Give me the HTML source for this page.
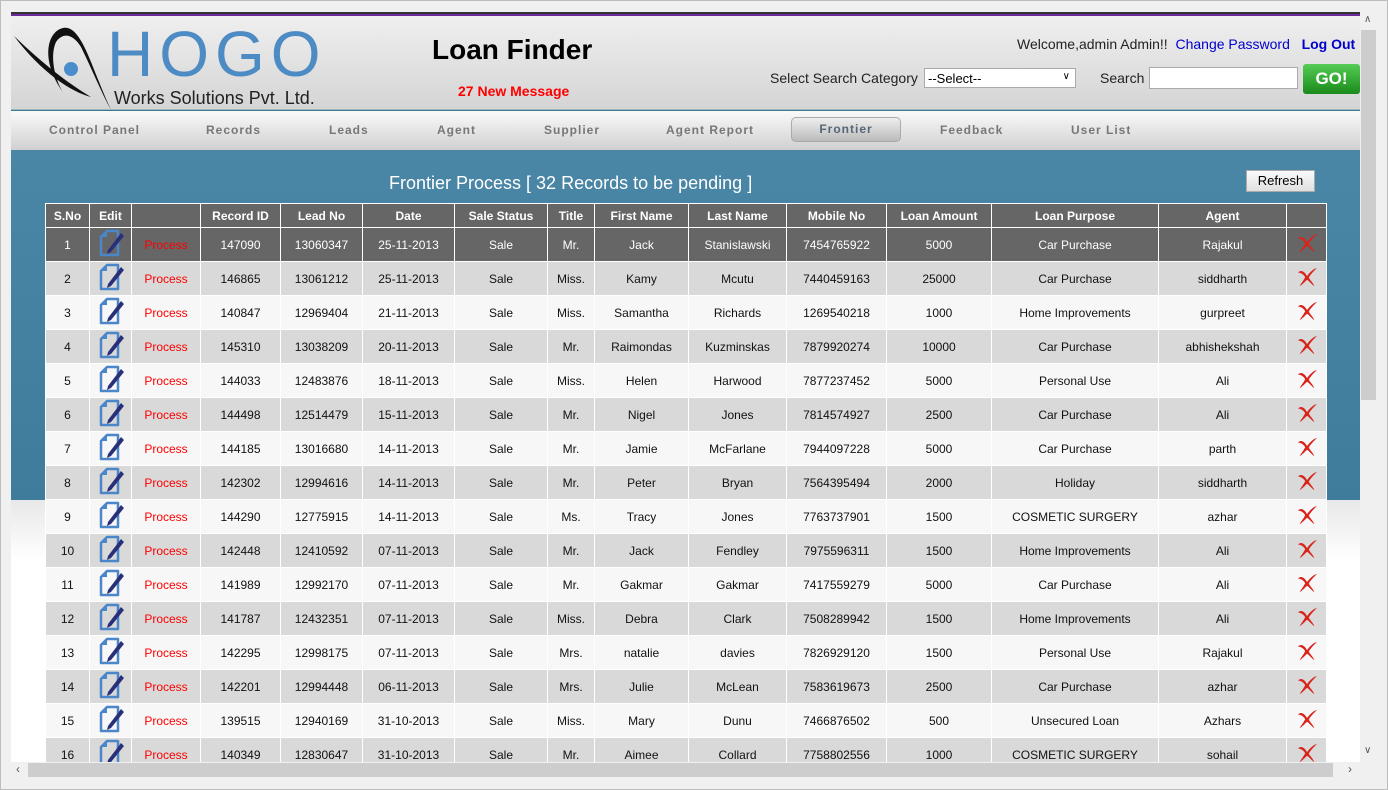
<!DOCTYPE html>
<html><head><meta charset="utf-8">
<style>
*{margin:0;padding:0;box-sizing:border-box}
body{width:1388px;height:790px;background:#f0f0f0;font-family:"Liberation Sans",Arial,sans-serif;position:relative;overflow:hidden}
.frame{position:absolute;left:0;top:0;width:1388px;height:790px;border:1px solid #bdbdbd}
.view{position:absolute;left:11px;top:12px;width:1349px;height:750px;overflow:hidden;background:#fff}
.hdr{position:absolute;left:0;top:0;width:1349px;height:99px;background:linear-gradient(#f0f0f0,#d4d4d4);border-top:2px solid #333}
.hdr:before{content:"";position:absolute;left:0;top:0;width:100%;height:2px;background:#6a2a9a}
.bl{position:absolute;left:0;top:95px;width:1349px;height:4px;background:#3f7890;border-top:1px solid #9bb}
.nav{position:absolute;left:0;top:99px;width:1349px;height:39px;background:linear-gradient(#fafafa,#d0d0d0)}
.nav span{position:absolute;top:12px;font-size:12px;font-weight:bold;color:#777;letter-spacing:1px}
.nav .act{top:6px;height:25px;width:110px;left:780px;border:1px solid #aaa;border-radius:5px;background:linear-gradient(#eee,#bbb);text-align:center;line-height:23px;color:#567}
.blue{position:absolute;left:0;top:138px;width:1349px;height:350px;background:linear-gradient(#4a86a5,#3f7b9b)}
.below{position:absolute;left:0;top:488px;width:1349px;height:270px;background:linear-gradient(#e8e8e8,#fff 60px)}
table{position:absolute;left:34px;top:191px;border-collapse:collapse;font-size:12px;table-layout:fixed}
td,th{border:1px solid #fff;text-align:center;height:34px;color:#111;padding:0}
th{background:#666;color:#fff;height:24px;font-size:12px}
tr.r1 td{background:#666;color:#fff}
tr.e td{background:#d9d9d9}
tr.o td{background:#f7f7f7}
tr td.p{color:#f00}
.vs{position:absolute;left:1360px;top:12px;width:17px;height:750px;background:#f0f0f0}
.vs .th{position:absolute;left:1px;top:18px;width:15px;height:370px;background:#cdcdcd}
.hs{position:absolute;left:11px;top:762px;width:1349px;height:16px;background:#f0f0f0}
.hs .th{position:absolute;left:17px;top:1px;width:1305px;height:14px;background:#cdcdcd}
</style></head><body>
<div class="frame"></div>
<div class="view">
<div class="hdr">
 <svg style="position:absolute;left:0;top:8px" width="110" height="90" viewBox="0 0 110 90">
  <path d="M3 14 C30 40 55 60 80 75 C60 70 30 50 3 14Z" fill="#111"/>
  <path d="M52 70 C30 40 35 10 52 6 C62 4 70 15 80 40 C88 60 94 75 100 88 C90 70 80 45 70 25 C62 12 52 10 45 20 C38 35 45 60 52 70Z" fill="#111"/>
  <circle cx="60" cy="47" r="7" fill="#4a8ccc"/>
 </svg>
 <div style="position:absolute;left:96px;top:8px;font-size:64px;color:#4d8bc4;letter-spacing:6px;line-height:64px">HOGO</div>
 <div style="position:absolute;left:103px;top:74px;font-size:18px;color:#222">Works Solutions Pvt. Ltd.</div>
 <div style="position:absolute;left:421px;top:20px;font-size:28px;font-weight:bold;color:#000">Loan Finder</div>
 <div style="position:absolute;left:447px;top:69px;font-size:14px;font-weight:bold;color:#f00">27 New Message</div>
 <div style="position:absolute;left:1006px;top:22px;font-size:14px;color:#222">Welcome,admin Admin!! &nbsp;<span style="color:#00c">Change Password</span> &nbsp;&nbsp;<b style="color:#00c">Log Out</b></div>
 <div style="position:absolute;left:759px;top:56px;font-size:14px;color:#222">Select Search Category</div>
 <div style="position:absolute;left:913px;top:54px;width:152px;height:20px;background:#fff;border:1px solid #aaa;font-size:13px;padding:2px 3px">--Select--<span style="position:absolute;right:5px;top:2px;font-size:10px">&#8744;</span></div>
 <div style="position:absolute;left:1089px;top:56px;font-size:14px;color:#222">Search</div>
 <div style="position:absolute;left:1138px;top:53px;width:149px;height:22px;background:#fff;border:1px solid #aaa"></div>
 <div style="position:absolute;left:1292px;top:50px;width:57px;height:30px;background:linear-gradient(#5c5,#1a8a1a);border-radius:3px;color:#fff;font-weight:bold;font-size:17px;text-align:center;line-height:30px">GO!</div>
 <div class="bl"></div>
</div>
<div class="nav">
 <span style="left:38px">Control Panel</span><span style="left:195px">Records</span><span style="left:318px">Leads</span><span style="left:426px">Agent</span><span style="left:533px">Supplier</span><span style="left:655px">Agent Report</span><span class="act">Frontier</span><span style="left:929px">Feedback</span><span style="left:1060px">User List</span>
</div>
<div class="blue"></div>
<div class="below"></div>
<div style="position:absolute;left:378px;top:161px;font-size:18px;color:#fff">Frontier Process [ 32 Records to be pending ]</div>
<div style="position:absolute;left:1235px;top:158px;width:69px;height:22px;background:linear-gradient(#fafafa,#e0e0e0);border:1px solid #aaa;font-size:13px;text-align:center;line-height:20px">Refresh</div>
<svg width="0" height="0" style="position:absolute"><defs>
<symbol id="ed" viewBox="0 0 30 30"><path d="M5 9 L11 3 H22 V27 H5 Z" fill="none" stroke="#4a86c8" stroke-width="2.5" stroke-linejoin="round"/><path d="M5 9 H11 V3" fill="#4a86c8"/><path d="M12 22 L25 5 L28 8 L15 24 Z M11 26 L12 22 L15 24Z" fill="#2a2f7a"/></symbol>
<symbol id="dx" viewBox="0 0 24 22"><path d="M2 6 C6 2 10 6 12 10 C15 6 19 2 23 1 C19 5 15 9 14 12 C16 15 19 18 20 21 C17 19 14 15 12 14 C9 17 6 20 4 21 C6 17 9 14 10 11 C8 8 5 6 2 6Z" fill="#d8241c"/></symbol>
</defs></svg>
<table>
<colgroup><col style="width:44px"><col style="width:42px"><col style="width:69px"><col style="width:80px"><col style="width:82px"><col style="width:92px"><col style="width:93px"><col style="width:47px"><col style="width:94px"><col style="width:98px"><col style="width:100px"><col style="width:105px"><col style="width:167px"><col style="width:128px"><col style="width:40px"></colgroup>
<tr><th>S.No</th><th>Edit</th><th></th><th>Record ID</th><th>Lead No</th><th>Date</th><th>Sale Status</th><th>Title</th><th>First Name</th><th>Last Name</th><th>Mobile No</th><th>Loan Amount</th><th>Loan Purpose</th><th>Agent</th><th></th></tr>
<tr class="r1"><td>1</td><td><svg width="30" height="30"><use href="#ed"/></svg></td><td class="p">Process</td><td>147090</td><td>13060347</td><td>25-11-2013</td><td>Sale</td><td>Mr.</td><td>Jack</td><td>Stanislawski</td><td>7454765922</td><td>5000</td><td>Car Purchase</td><td>Rajakul</td><td><svg width="22" height="20"><use href="#dx"/></svg></td></tr>
<tr class="e"><td>2</td><td><svg width="30" height="30"><use href="#ed"/></svg></td><td class="p">Process</td><td>146865</td><td>13061212</td><td>25-11-2013</td><td>Sale</td><td>Miss.</td><td>Kamy</td><td>Mcutu</td><td>7440459163</td><td>25000</td><td>Car Purchase</td><td>siddharth</td><td><svg width="22" height="20"><use href="#dx"/></svg></td></tr>
<tr class="o"><td>3</td><td><svg width="30" height="30"><use href="#ed"/></svg></td><td class="p">Process</td><td>140847</td><td>12969404</td><td>21-11-2013</td><td>Sale</td><td>Miss.</td><td>Samantha</td><td>Richards</td><td>1269540218</td><td>1000</td><td>Home Improvements</td><td>gurpreet</td><td><svg width="22" height="20"><use href="#dx"/></svg></td></tr>
<tr class="e"><td>4</td><td><svg width="30" height="30"><use href="#ed"/></svg></td><td class="p">Process</td><td>145310</td><td>13038209</td><td>20-11-2013</td><td>Sale</td><td>Mr.</td><td>Raimondas</td><td>Kuzminskas</td><td>7879920274</td><td>10000</td><td>Car Purchase</td><td>abhishekshah</td><td><svg width="22" height="20"><use href="#dx"/></svg></td></tr>
<tr class="o"><td>5</td><td><svg width="30" height="30"><use href="#ed"/></svg></td><td class="p">Process</td><td>144033</td><td>12483876</td><td>18-11-2013</td><td>Sale</td><td>Miss.</td><td>Helen</td><td>Harwood</td><td>7877237452</td><td>5000</td><td>Personal Use</td><td>Ali</td><td><svg width="22" height="20"><use href="#dx"/></svg></td></tr>
<tr class="e"><td>6</td><td><svg width="30" height="30"><use href="#ed"/></svg></td><td class="p">Process</td><td>144498</td><td>12514479</td><td>15-11-2013</td><td>Sale</td><td>Mr.</td><td>Nigel</td><td>Jones</td><td>7814574927</td><td>2500</td><td>Car Purchase</td><td>Ali</td><td><svg width="22" height="20"><use href="#dx"/></svg></td></tr>
<tr class="o"><td>7</td><td><svg width="30" height="30"><use href="#ed"/></svg></td><td class="p">Process</td><td>144185</td><td>13016680</td><td>14-11-2013</td><td>Sale</td><td>Mr.</td><td>Jamie</td><td>McFarlane</td><td>7944097228</td><td>5000</td><td>Car Purchase</td><td>parth</td><td><svg width="22" height="20"><use href="#dx"/></svg></td></tr>
<tr class="e"><td>8</td><td><svg width="30" height="30"><use href="#ed"/></svg></td><td class="p">Process</td><td>142302</td><td>12994616</td><td>14-11-2013</td><td>Sale</td><td>Mr.</td><td>Peter</td><td>Bryan</td><td>7564395494</td><td>2000</td><td>Holiday</td><td>siddharth</td><td><svg width="22" height="20"><use href="#dx"/></svg></td></tr>
<tr class="o"><td>9</td><td><svg width="30" height="30"><use href="#ed"/></svg></td><td class="p">Process</td><td>144290</td><td>12775915</td><td>14-11-2013</td><td>Sale</td><td>Ms.</td><td>Tracy</td><td>Jones</td><td>7763737901</td><td>1500</td><td>COSMETIC SURGERY</td><td>azhar</td><td><svg width="22" height="20"><use href="#dx"/></svg></td></tr>
<tr class="e"><td>10</td><td><svg width="30" height="30"><use href="#ed"/></svg></td><td class="p">Process</td><td>142448</td><td>12410592</td><td>07-11-2013</td><td>Sale</td><td>Mr.</td><td>Jack</td><td>Fendley</td><td>7975596311</td><td>1500</td><td>Home Improvements</td><td>Ali</td><td><svg width="22" height="20"><use href="#dx"/></svg></td></tr>
<tr class="o"><td>11</td><td><svg width="30" height="30"><use href="#ed"/></svg></td><td class="p">Process</td><td>141989</td><td>12992170</td><td>07-11-2013</td><td>Sale</td><td>Mr.</td><td>Gakmar</td><td>Gakmar</td><td>7417559279</td><td>5000</td><td>Car Purchase</td><td>Ali</td><td><svg width="22" height="20"><use href="#dx"/></svg></td></tr>
<tr class="e"><td>12</td><td><svg width="30" height="30"><use href="#ed"/></svg></td><td class="p">Process</td><td>141787</td><td>12432351</td><td>07-11-2013</td><td>Sale</td><td>Miss.</td><td>Debra</td><td>Clark</td><td>7508289942</td><td>1500</td><td>Home Improvements</td><td>Ali</td><td><svg width="22" height="20"><use href="#dx"/></svg></td></tr>
<tr class="o"><td>13</td><td><svg width="30" height="30"><use href="#ed"/></svg></td><td class="p">Process</td><td>142295</td><td>12998175</td><td>07-11-2013</td><td>Sale</td><td>Mrs.</td><td>natalie</td><td>davies</td><td>7826929120</td><td>1500</td><td>Personal Use</td><td>Rajakul</td><td><svg width="22" height="20"><use href="#dx"/></svg></td></tr>
<tr class="e"><td>14</td><td><svg width="30" height="30"><use href="#ed"/></svg></td><td class="p">Process</td><td>142201</td><td>12994448</td><td>06-11-2013</td><td>Sale</td><td>Mrs.</td><td>Julie</td><td>McLean</td><td>7583619673</td><td>2500</td><td>Car Purchase</td><td>azhar</td><td><svg width="22" height="20"><use href="#dx"/></svg></td></tr>
<tr class="o"><td>15</td><td><svg width="30" height="30"><use href="#ed"/></svg></td><td class="p">Process</td><td>139515</td><td>12940169</td><td>31-10-2013</td><td>Sale</td><td>Miss.</td><td>Mary</td><td>Dunu</td><td>7466876502</td><td>500</td><td>Unsecured Loan</td><td>Azhars</td><td><svg width="22" height="20"><use href="#dx"/></svg></td></tr>
<tr class="e"><td>16</td><td><svg width="30" height="30"><use href="#ed"/></svg></td><td class="p">Process</td><td>140349</td><td>12830647</td><td>31-10-2013</td><td>Sale</td><td>Mr.</td><td>Aimee</td><td>Collard</td><td>7758802556</td><td>1000</td><td>COSMETIC SURGERY</td><td>sohail</td><td><svg width="22" height="20"><use href="#dx"/></svg></td></tr>
</table>
</div>
<div class="vs"><div style="position:absolute;left:4px;top:2px;font-size:10px;color:#555">&#8743;</div><div class="th"></div><div style="position:absolute;left:4px;top:733px;font-size:10px;color:#555">&#8744;</div></div>
<div class="hs"><div style="position:absolute;left:5px;top:0;font-size:12px;color:#555">&#8249;</div><div class="th"></div><div style="position:absolute;left:1337px;top:0;font-size:12px;color:#555">&#8250;</div></div>
</body></html>
